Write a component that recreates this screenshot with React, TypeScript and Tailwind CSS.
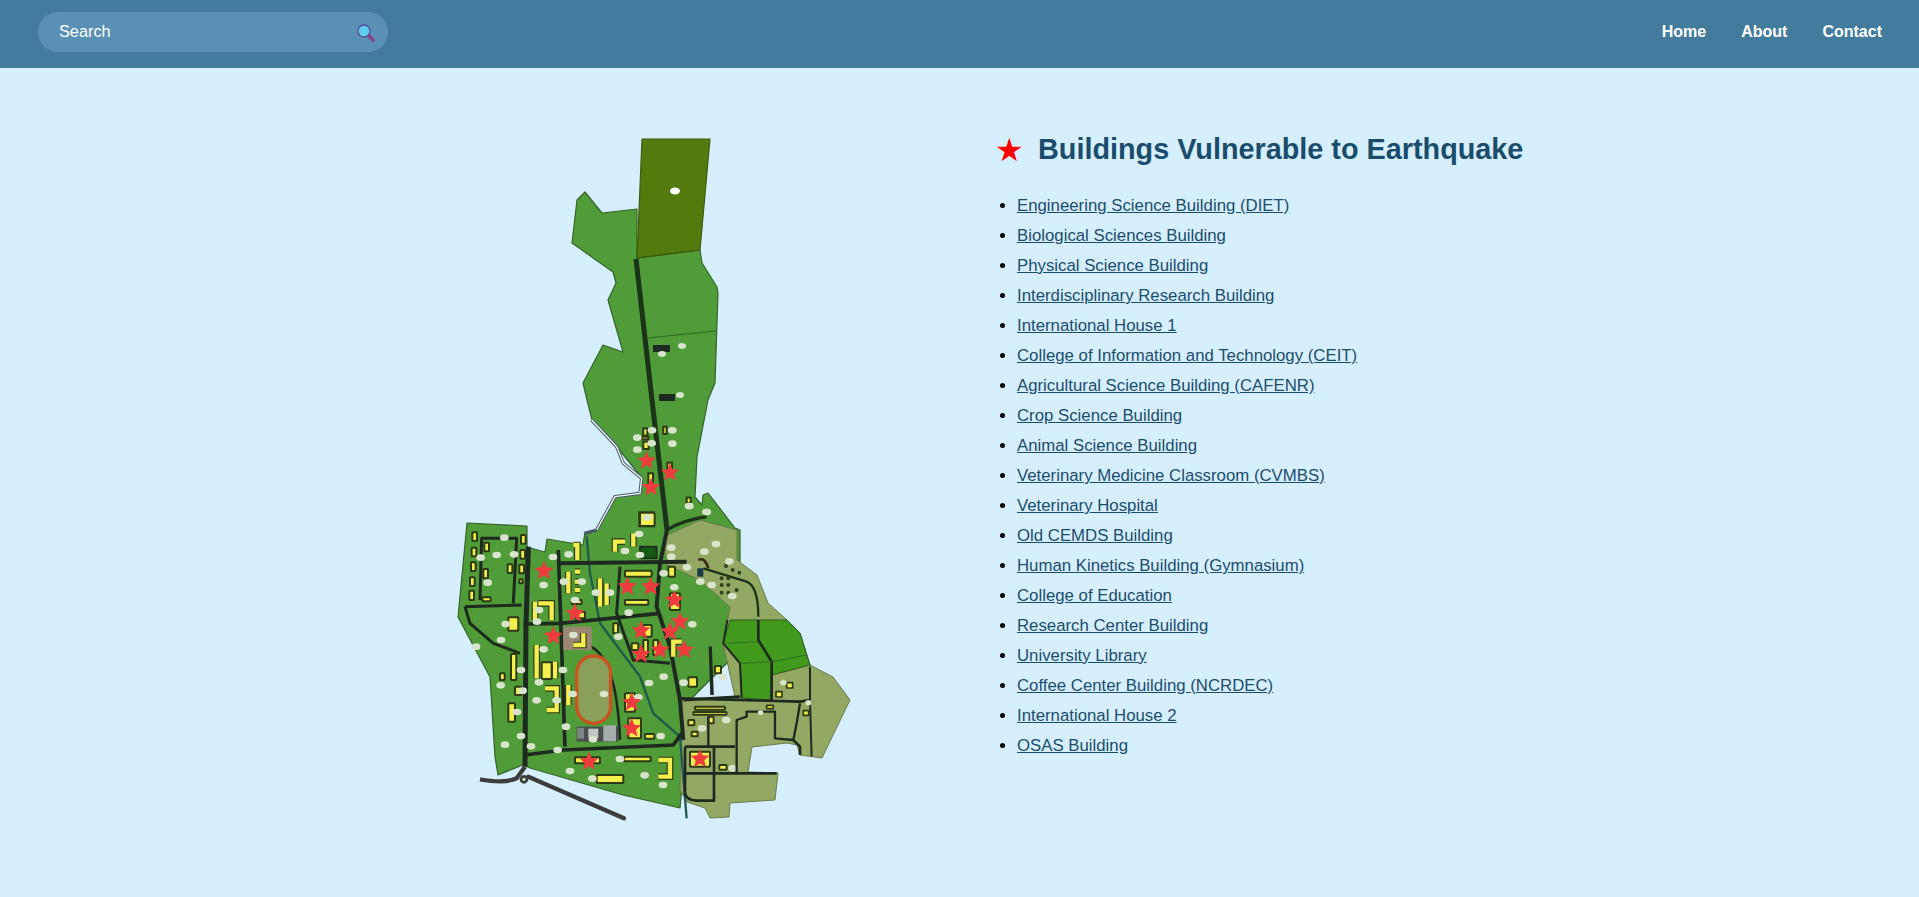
const buildings = [
  'Engineering Science Building (DIET)',
  'Biological Sciences Building',
  'Physical Science Building',
  'Interdisciplinary Research Building',
  'International House 1',
  'College of Information and Technology (CEIT)',
  'Agricultural Science Building (CAFENR)',
  'Crop Science Building',
  'Animal Science Building',
  'Veterinary Medicine Classroom (CVMBS)',
  'Veterinary Hospital',
  'Old CEMDS Building',
  'Human Kinetics Building (Gymnasium)',
  'College of Education',
  'Research Center Building',
  'University Library',
  'Coffee Center Building (NCRDEC)',
  'International House 2',
  'OSAS Building',
];

// map pieces below are in the 3x crop units, hence the scale on the groups
const rects = [
  [97, 97, 14, 26], [95, 143, 14, 26], [93, 187, 14, 26], [90, 232, 14, 26], [88, 272, 14, 28], [133, 128, 14, 26],
  [130, 207, 14, 28], [127, 292, 25, 12], [243, 105, 14, 26], [241, 150, 14, 26], [238, 194, 14, 26], [203, 193, 14, 26],
  [238, 238, 10, 12], [600, 38, 44, 40], [555, 212, 80, 18], [555, 300, 70, 14], [205, 352, 30, 40], [213, 462, 16, 78],
  [395, 300, 30, 12], [405, 335, 30, 20], [305, 487, 30, 50], [205, 610, 20, 55], [225, 560, 20, 25], [180, 520, 14, 20],
  [520, 370, 14, 30], [610, 375, 25, 35], [575, 430, 20, 20], [610, 420, 14, 50], [640, 420, 14, 45], [690, 280, 30, 50],
  [685, 200, 20, 30], [825, 498, 18, 22], [745, 532, 26, 28], [555, 580, 30, 55], [565, 655, 38, 60], [615, 702, 28, 14],
  [405, 772, 75, 18], [552, 770, 80, 14], [470, 825, 80, 24], [750, 755, 60, 45], [838, 795, 22, 14], [755, 695, 18, 14],
  [765, 620, 90, 9], [760, 636, 100, 8], [745, 660, 18, 16], [805, 650, 16, 20],
];

const wings = [
  'M525,155 L525,125 L555,125', 'M580,140 V100', 'M480,235 V320', 'M500,250 V315', 'M400,135 H412 V180', 'M385,215 V280',
  'M405,215 H420', 'M405,245 H420', 'M405,270 H420', 'M285,305 V360', 'M295,310 H335 V360', 'M290,435 V535', 'M345,485 V535',
  'M315,565 H350 V630 H320', 'M385,555 V615', 'M400,435 H430 V400', 'M700,470 V425 H725', 'M655,780 H690 V830 H655',
];

const dots = [
  [193, 113], [170, 165], [122, 173], [222, 163], [143, 248], [339, 171], [386, 163], [311, 255], [372, 245], [425, 245],
  [468, 278], [510, 278], [405, 300], [297, 330], [291, 365], [197, 372], [183, 420], [108, 440], [311, 448], [400, 405],
  [243, 510], [182, 556], [297, 547], [369, 510], [248, 572], [290, 601], [350, 601], [398, 582], [492, 582], [231, 636],
  [243, 708], [195, 734], [273, 739], [353, 750], [378, 680], [459, 718], [540, 777], [390, 813], [457, 836], [614, 826],
  [669, 855], [662, 708], [595, 592], [627, 549], [671, 530], [731, 548], [848, 531], [757, 373], [703, 262], [671, 220],
  [566, 338], [535, 410], [600, 165], [555, 153], [597, 102], [694, 143], [694, 170], [741, 202], [622, 52], [800, 36],
  [748, 18], [828, 132], [793, 155], [868, 184], [877, 288], [815, 255], [781, 245], [786, 685], [859, 660], [878, 805],
];

const stars = [
  [312, 213], [405, 340], [340, 408], [562, 260], [632, 260], [703, 300], [720, 365], [690, 395], [603, 392], [603, 463],
  [660, 450], [733, 450], [575, 607], [575, 685], [447, 785], [780, 777],
];

const northStars = [[200, 182], [270, 218], [213, 262]];
const northRects = [[190, 85, 12, 22], [250, 80, 10, 22], [185, 110, 20, 8], [190, 125, 16, 22], [205, 220, 14, 30], [262, 188, 14, 30], [320, 293, 12, 16], [178, 337, 44, 42]];
const northDots = [[216, 91], [277, 91], [172, 113], [215, 130], [277, 131], [172, 149], [327, 318], [380, 336]];

function starPath(cx: number, cy: number, r: number) {
  const points = [];
  for (let i = 0; i < 10; i++) {
    const radius = i % 2 === 0 ? r : r * 0.45;
    const angle = -Math.PI / 2 + (i * Math.PI) / 5;
    points.push(`${(cx + radius * Math.cos(angle)).toFixed(1)},${(cy + radius * Math.sin(angle)).toFixed(1)}`);
  }
  return `M${points.join(' L')} Z`;
}

function CampusMap() {
  return (
    <svg viewBox="450 130 420 700" className="w-[420px] h-[700px] shrink-0 blur-[0.7px]">
      <polygon
        points="637,209 602,213 585,192 577,200 572,243 613,272 616,283 608,300 623,352 603,345 583,383 587,400 592,420 617,447 642,478 640,493 615,497 597,530 585,532 583,545 547,539 545,552 527,547 527,526 467,523 458,617 490,677 495,757 498,775 523,765 530,768 623,795 680,808 690,700 740,650 740,530 735,528 708,493 703,495 702,505 695,497 697,457 708,400 715,383 718,293 717,287 702,263 700,250 637,258"
        fill="#4f9c38"
        stroke="#35632a"
        strokeWidth="1.2"
        strokeLinejoin="round"
      />
      <polygon points="642,139 710,139 700,250 637,258" fill="#537a0c" stroke="#3d5c10" strokeWidth="1.2" strokeLinejoin="round" />
      <polygon
        points="663,537 700,520 737,530 737,560 757,575 768,603 787,620 800,633 810,665 833,677 850,700 822,758 800,755 797,745 787,743 752,747 748,772 778,773 775,800 730,803 729,817 710,818 705,808 687,802 680,790 682,700 735,697 723,643 730,607 700,580 667,565"
        fill="#93a862"
        stroke="#6a7a4c"
        strokeWidth="1"
        strokeLinejoin="round"
      />
      <polygon points="730,620 787,620 800,633 810,665 772,675 770,700 742,698 740,663 723,643" fill="#429a1c" stroke="#2c5a24" strokeWidth="1" strokeLinejoin="round" />
      <ellipse cx="675" cy="191" rx="5" ry="3.5" fill="#ffffff" />
      <path d="M636,259 L652,400 L667,530" fill="none" stroke="#1b3318" strokeWidth="5" />
      <path d="M647,338 L716,331" fill="none" stroke="#2c6a24" strokeWidth="1.2" />
      <path d="M637,258 L700,250" fill="none" stroke="#3d5c10" strokeWidth="1.2" />
      <rect x="653" y="345" width="17" height="7" fill="#1e2a20" />
      <rect x="659" y="394" width="16" height="7" fill="#1e2a20" />
      <ellipse cx="682" cy="346" rx="4" ry="3" fill="#d8e4cc" />
      <ellipse cx="662" cy="354" rx="4" ry="3" fill="#d8e4cc" />
      <ellipse cx="680" cy="395" rx="4" ry="3" fill="#d8e4cc" />

      <g transform="translate(580 400) scale(0.3333)">
        <path d="M35,60 L110,140 L130,190 L185,235 L180,280 L105,290 L50,390 L15,400" fill="none" stroke="#465a66" strokeWidth="10" strokeLinejoin="round" />
        <path d="M35,60 L110,140 L130,190 L185,235 L180,280 L105,290 L50,390" fill="none" stroke="#f4f8f8" strokeWidth="4" strokeLinejoin="round" />
        <path d="M260,390 Q310,360 380,350" fill="none" stroke="#1b3318" strokeWidth="10" />
        {northRects.map(([x, y, w, h]) => (
          <rect key={`${x}-${y}`} x={x} y={y} width={w} height={h} fill="#f5ef4e" stroke="#2c3a14" strokeWidth="6" />
        ))}
        {northDots.map(([x, y]) => (
          <ellipse key={`${x}-${y}`} cx={x} cy={y} rx="13" ry="10" fill="#d8e4cc" />
        ))}
        <path d="M355,480 Q375,470 385,505" fill="none" stroke="#3a2a14" strokeWidth="8" />
        <rect x="352" y="505" width="18" height="25" fill="#1c3a4c" />
        <path d="M370,505 L500,545 Q535,560 535,650" fill="none" stroke="#1b3318" strokeWidth="7" />
        {[[425, 535], [445, 535], [425, 555], [445, 555], [470, 570], [425, 578], [445, 578], [438, 498], [458, 510], [478, 518]].map(([x, y]) => (
          <circle key={`${x}-${y}`} cx={x} cy={y} r="6" fill="#33421f" />
        ))}
        {northStars.map(([x, y]) => (
          <path key={`${x}-${y}`} d={starPath(x, y, 29)} fill="#f03c3c" />
        ))}
      </g>

      <g transform="translate(440 500) scale(0.3333)">
        <path d="M440,110 L450,220 L480,370 L600,530 L640,640 L720,710 L740,955" fill="none" stroke="#1f5a4c" strokeWidth="7" />
        <g fill="none" stroke="#1e2a20" strokeLinejoin="round">
          <path d="M265,140 L258,380 L255,800" strokeWidth="15" />
          <path d="M355,190 L740,185" strokeWidth="12" />
          <path d="M355,150 L375,740" strokeWidth="11" />
          <path d="M255,765 L370,750 L700,735 L725,700" strokeWidth="11" />
          <path d="M250,372 L360,370 L660,340" strokeWidth="11" />
          <path d="M75,320 L245,315" strokeWidth="9" />
          <path d="M75,320 L90,370 L160,430 L240,460" strokeWidth="9" />
          <path d="M120,300 L125,115 L230,115 L220,310" strokeWidth="9" />
          <path d="M681,90 L660,190 L650,320 L690,440 L720,600 L730,720" strokeWidth="12" />
          <path d="M540,200 L530,340 L580,480 L690,490" strokeWidth="9" />
          <path d="M440,435 Q530,460 540,720" strokeWidth="8" />
          <path d="M730,600 L900,590" strokeWidth="9" />
          <path d="M810,440 L815,585" strokeWidth="8" />
          <path d="M120,838 Q195,852 230,835 L255,800" stroke="#3c3c3c" strokeWidth="13" />
          <path d="M265,830 L552,955" stroke="#3c3c3c" strokeWidth="13" strokeLinecap="round" />
        </g>
        <circle cx="252" cy="838" r="9" fill="#d8e4cc" stroke="#3c3c3c" strokeWidth="8" />
        <rect x="370" y="380" width="85" height="70" fill="#9a8672" />
        <rect x="410" y="468" width="102" height="202" rx="51" fill="#8aa05a" stroke="#c8551f" strokeWidth="10" />
        <rect x="410" y="680" width="125" height="45" fill="#4a4f4f" />
        <rect x="490" y="676" width="38" height="48" fill="#a5acac" />
        <rect x="412" y="684" width="20" height="32" fill="#7d8585" />
        <rect x="445" y="686" width="30" height="28" fill="#c3c8c4" />
        <rect x="600" y="140" width="50" height="35" fill="#175a14" stroke="#1e2a20" strokeWidth="5" />
        {wings.map((d) => (
          <path key={`o${d}`} d={d} fill="none" stroke="#2c3a14" strokeWidth="20" />
        ))}
        {wings.map((d) => (
          <path key={d} d={d} fill="none" stroke="#f5ef4e" strokeWidth="13" />
        ))}
        {rects.map(([x, y, w, h]) => (
          <rect key={`${x}-${y}`} x={x} y={y} width={w} height={h} rx="2" fill="#f5ef4e" stroke="#2c3a14" strokeWidth="6" />
        ))}
        {dots.map(([x, y]) => (
          <ellipse key={`${x}-${y}`} cx={x} cy={y} rx="13" ry="10" fill="#d8e4cc" />
        ))}
        {stars.map(([x, y]) => (
          <path key={`${x}-${y}`} d={starPath(x, y, 30)} fill="#f03c3c" />
        ))}
      </g>

      <g transform="translate(640 620) scale(0.3333)" fill="none" stroke="#1e2a20" strokeLinejoin="round">
        <path d="M120,235 L480,245 L510,240" strokeWidth="8" />
        <path d="M290,380 V300 L320,290 V275 H405 V355 L460,360 L470,310 L480,250" strokeWidth="7" />
        <path d="M135,380 H285" strokeWidth="8" />
        <path d="M135,460 H410" strokeWidth="8" />
        <path d="M135,380 V520 Q140,540 170,542 H222 V380" strokeWidth="8" />
        <path d="M205,290 V380" strokeWidth="7" />
        <path d="M290,380 V460" strokeWidth="7" />
        <path d="M262,0 L250,70 L300,130 L305,235" strokeWidth="6" />
        <path d="M355,0 V60 L395,125 V240" strokeWidth="8" />
        <path d="M510,140 V240 L515,410" strokeWidth="6" />
        <path d="M460,360 L480,380 V405" strokeWidth="8" />
        <path d="M212,80 L218,225" strokeWidth="7" />
        <path d="M265,70 L355,65 M305,130 L395,125 M400,125 L500,105" stroke="#2c6a24" strokeWidth="3" />
        <g fill="#f5ef4e" stroke="#2c3a14" strokeWidth="5">
          <rect x="440" y="188" width="18" height="16" />
          <rect x="408" y="215" width="18" height="16" />
          <rect x="380" y="256" width="20" height="10" />
          <rect x="490" y="272" width="16" height="14" />
        </g>
        <ellipse cx="430" cy="188" rx="10" ry="8" fill="#d8e4cc" stroke="none" />
        <ellipse cx="505" cy="248" rx="9" ry="8" fill="#d8e4cc" stroke="none" />
        <ellipse cx="362" cy="278" rx="8" ry="7" fill="#d8e4cc" stroke="none" />
      </g>
    </svg>
  );
}

export default function App() {
  return (
    <div className="min-h-[897px] bg-[#d6effe] font-['Liberation_Sans',Arial,sans-serif]">
      <nav className="h-[68px] bg-[#437b9c] flex items-center justify-between pl-[38px] pr-[37px] pb-1">
        <div className="w-[350px] h-10 rounded-full bg-[#5a90b3] flex items-center justify-between pl-[21px] pr-[13px]">
          <span className="text-white text-[16.3px] pb-[1px]">Search</span>
          <svg viewBox="0 0 18 18" className="w-[18px] h-[18px] mt-[2px]">
            <line x1="11" y1="11" x2="16" y2="16" stroke="#8a3f86" strokeWidth="3.4" strokeLinecap="round" />
            <circle cx="7" cy="7" r="6" fill="#5fcdf2" stroke="#5b4a95" strokeWidth="1.3" />
          </svg>
        </div>
        <div className="flex items-center gap-[35px] pb-[1px] text-white text-base font-bold">
          <a>Home</a>
          <a>About</a>
          <a>Contact</a>
        </div>
      </nav>
      <main className="flex pl-[450px] pt-[62px]">
        <CampusMap />
        <section className="ml-[127px]">
          <h1 className="flex items-center h-10 text-[28.8px] font-bold text-[#1a4d6b]">
            <span className="text-[#ff0000] text-[32px] font-['DejaVu_Sans',sans-serif] -ml-[2px] w-[43px]">★</span>
            Buildings Vulnerable to Earthquake
          </h1>
          <ul className="mt-[21px] list-disc pl-5 marker:text-black">
            {buildings.map((name) => (
              <li key={name} className="h-[30px] leading-[30px] text-[16.8px]">
                <a className="text-[#1a4d6b] underline">{name}</a>
              </li>
            ))}
          </ul>
        </section>
      </main>
    </div>
  );
}
